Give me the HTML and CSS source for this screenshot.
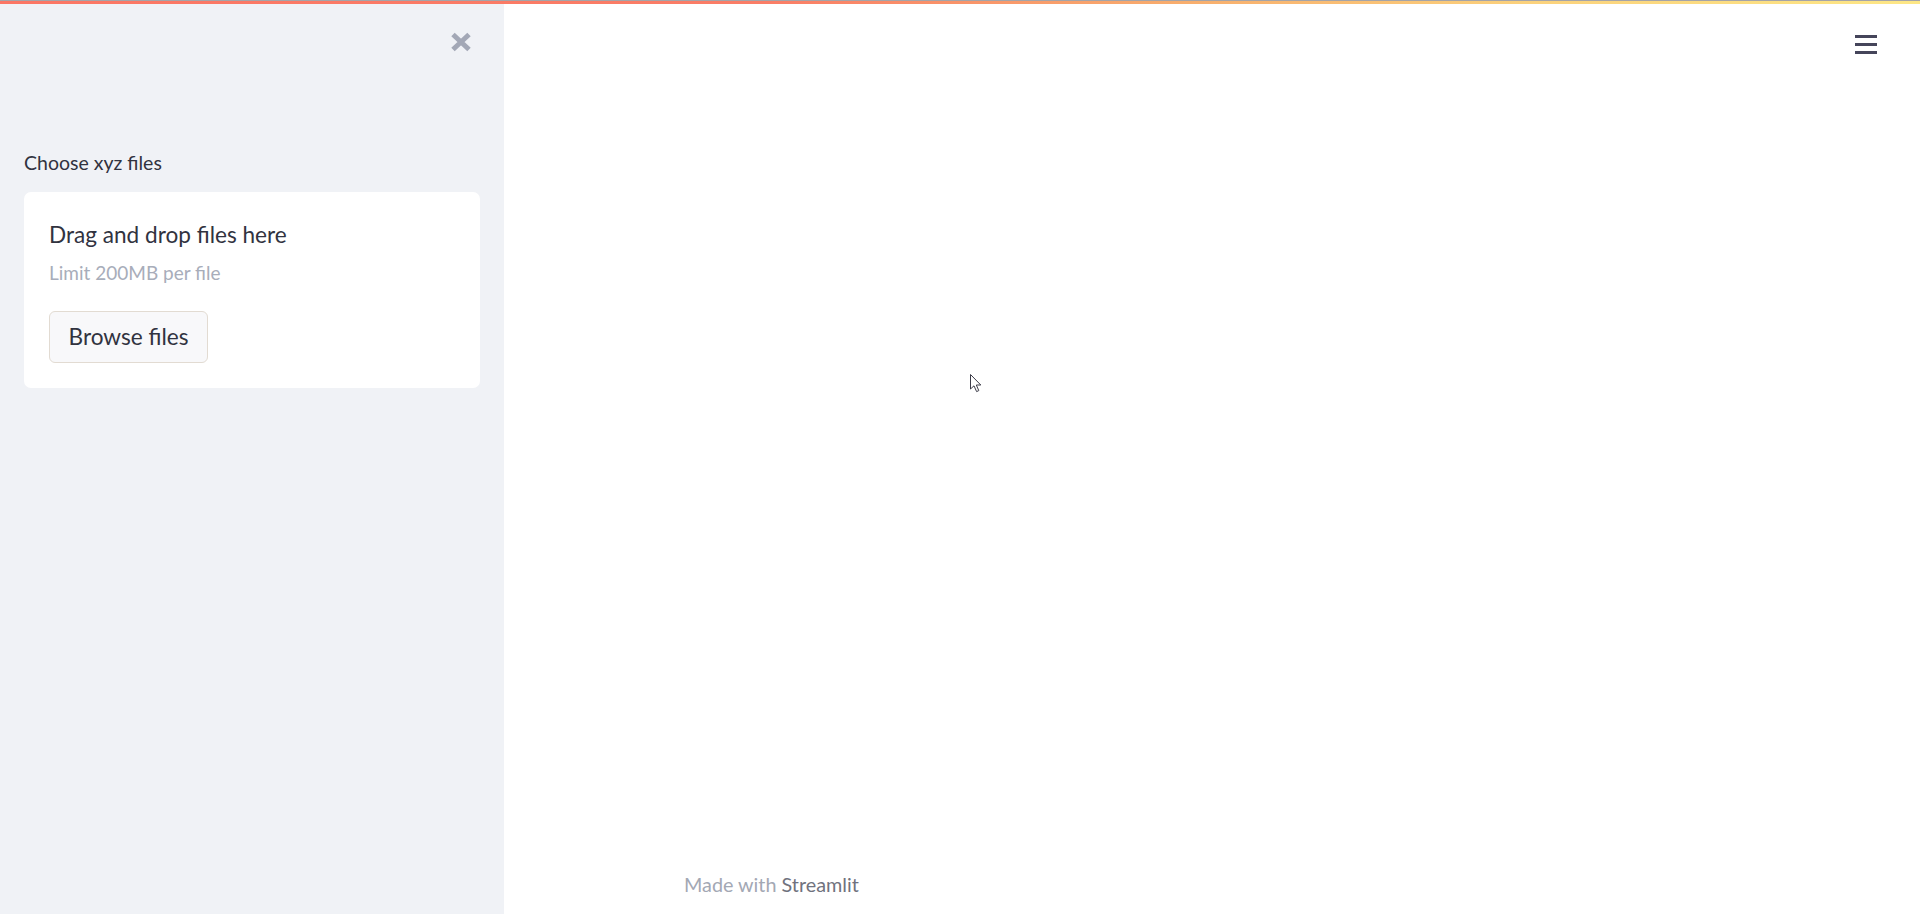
FILE: index.html
```html
<!DOCTYPE html>
<html lang="en">
<head>
<meta charset="utf-8">
<title>Streamlit</title>
<link rel="stylesheet" href="styles.css">
</head>
<body>
<div class="decoration"></div>
<div class="app">
  <aside class="sidebar">
    <div class="sidebar-head">
      <button class="close-btn" aria-label="Close sidebar">
        <svg width="22" height="20" viewBox="0 0 22 20"><path d="M3 2.5 L19 17.5 M19 2.5 L3 17.5" stroke="#a3a8b6" stroke-width="5" fill="none"/></svg>
      </button>
    </div>
    <div class="uploader">
      <div class="uploader-label">Choose xyz files</div>
      <section class="dropzone">
        <div class="drop-title">Drag and drop files here</div>
        <div class="drop-limit">Limit 200MB per file</div>
        <button class="browse-btn">Browse files</button>
      </section>
    </div>
  </aside>
  <main class="main">
    <div class="toolbar">
      <button class="menu-btn" aria-label="Menu">
        <span class="bar"></span><span class="bar"></span><span class="bar"></span>
      </button>
    </div>
    <div class="block">
      <footer class="footer">Made with <span class="brand">Streamlit</span></footer>
    </div>
    <svg class="cursor" width="12" height="19" viewBox="0 0 12 19"><path d="M0.5 0.5 L0.5 15 L4 11.8 L6.6 17.6 L8.8 16.6 L6.3 11 L10.8 11 Z" fill="#ffffff" stroke="#3c3c48" stroke-width="1"/></svg>
  </main>
</div>
</body>
</html>
```
FILE: styles.css
```css
* { box-sizing: border-box; }
html, body { margin: 0; padding: 0; }
body {
  width: 1920px;
  height: 914px;
  overflow: hidden;
  font-family: Lato, "Noto Sans", sans-serif;
  color: #31333f;
  background: #ffffff;
  display: flex;
  flex-direction: column;
}
.decoration {
  height: 4px;
  flex: none;
  border-top: 1px solid #a4a4a8;
  background: linear-gradient(90deg, #fb7664 0%, #fa7d66 40%, #f8ae6d 62%, #fbd27c 80%, #fde786 100%);
}
.app {
  flex: 1;
  display: flex;
  min-height: 0;
}
.sidebar {
  width: 504px;
  flex: none;
  background: #f0f2f6;
  padding: 0 24px;
  display: flex;
  flex-direction: column;
}
.sidebar-head {
  display: flex;
  justify-content: flex-end;
  padding-top: 28px;
  padding-right: 8px;
}
.close-btn {
  border: 0;
  background: none;
  padding: 0;
  width: 22px;
  height: 20px;
  display: block;
}
.close-btn svg { display: block; }
.uploader {
  margin-top: 99px;
}
.uploader-label {
  font-size: 19.5px;
  line-height: 24px;
  color: #31333f;
  margin-bottom: 17px;
}
.dropzone {
  background: #ffffff;
  border-radius: 7px;
  padding: 29px 24px 25px 25px;
  display: flex;
  flex-direction: column;
  align-items: flex-start;
}
.drop-title {
  font-size: 22.6px;
  line-height: 28px;
  color: #31333f;
}
.drop-limit {
  margin-top: 12px;
  font-size: 19px;
  line-height: 24px;
  color: #a8adba;
}
.browse-btn {
  margin-top: 26px;
  width: 159px;
  height: 52px;
  border: 1px solid #e2dbd2;
  border-radius: 6px;
  background: #f8f8fa;
  font-family: Lato, "Noto Sans", sans-serif;
  font-size: 22.6px;
  color: #31333f;
  padding: 0 0 2px;
  display: flex;
  align-items: center;
  justify-content: center;
}
.main {
  flex: 1;
  position: relative;
  display: flex;
  flex-direction: column;
}
.toolbar {
  display: flex;
  justify-content: flex-end;
  padding-top: 31px;
  padding-right: 43px;
}
.menu-btn {
  border: 0;
  background: none;
  padding: 0;
  width: 22px;
  display: flex;
  flex-direction: column;
  gap: 5px;
}
.bar {
  display: block;
  width: 22px;
  height: 3px;
  background: #45455a;
}
.block {
  flex: 1;
  width: 100%;
  max-width: 1104px;
  margin: 0 auto;
  padding: 0 24px 18px;
  display: flex;
  flex-direction: column;
  justify-content: flex-end;
}
.footer {
  font-size: 19.8px;
  line-height: 24px;
  color: #a3a8b4;
}
.brand { color: #70727e; }
.cursor {
  position: absolute;
  left: 466px;
  top: 370px;
}
```
